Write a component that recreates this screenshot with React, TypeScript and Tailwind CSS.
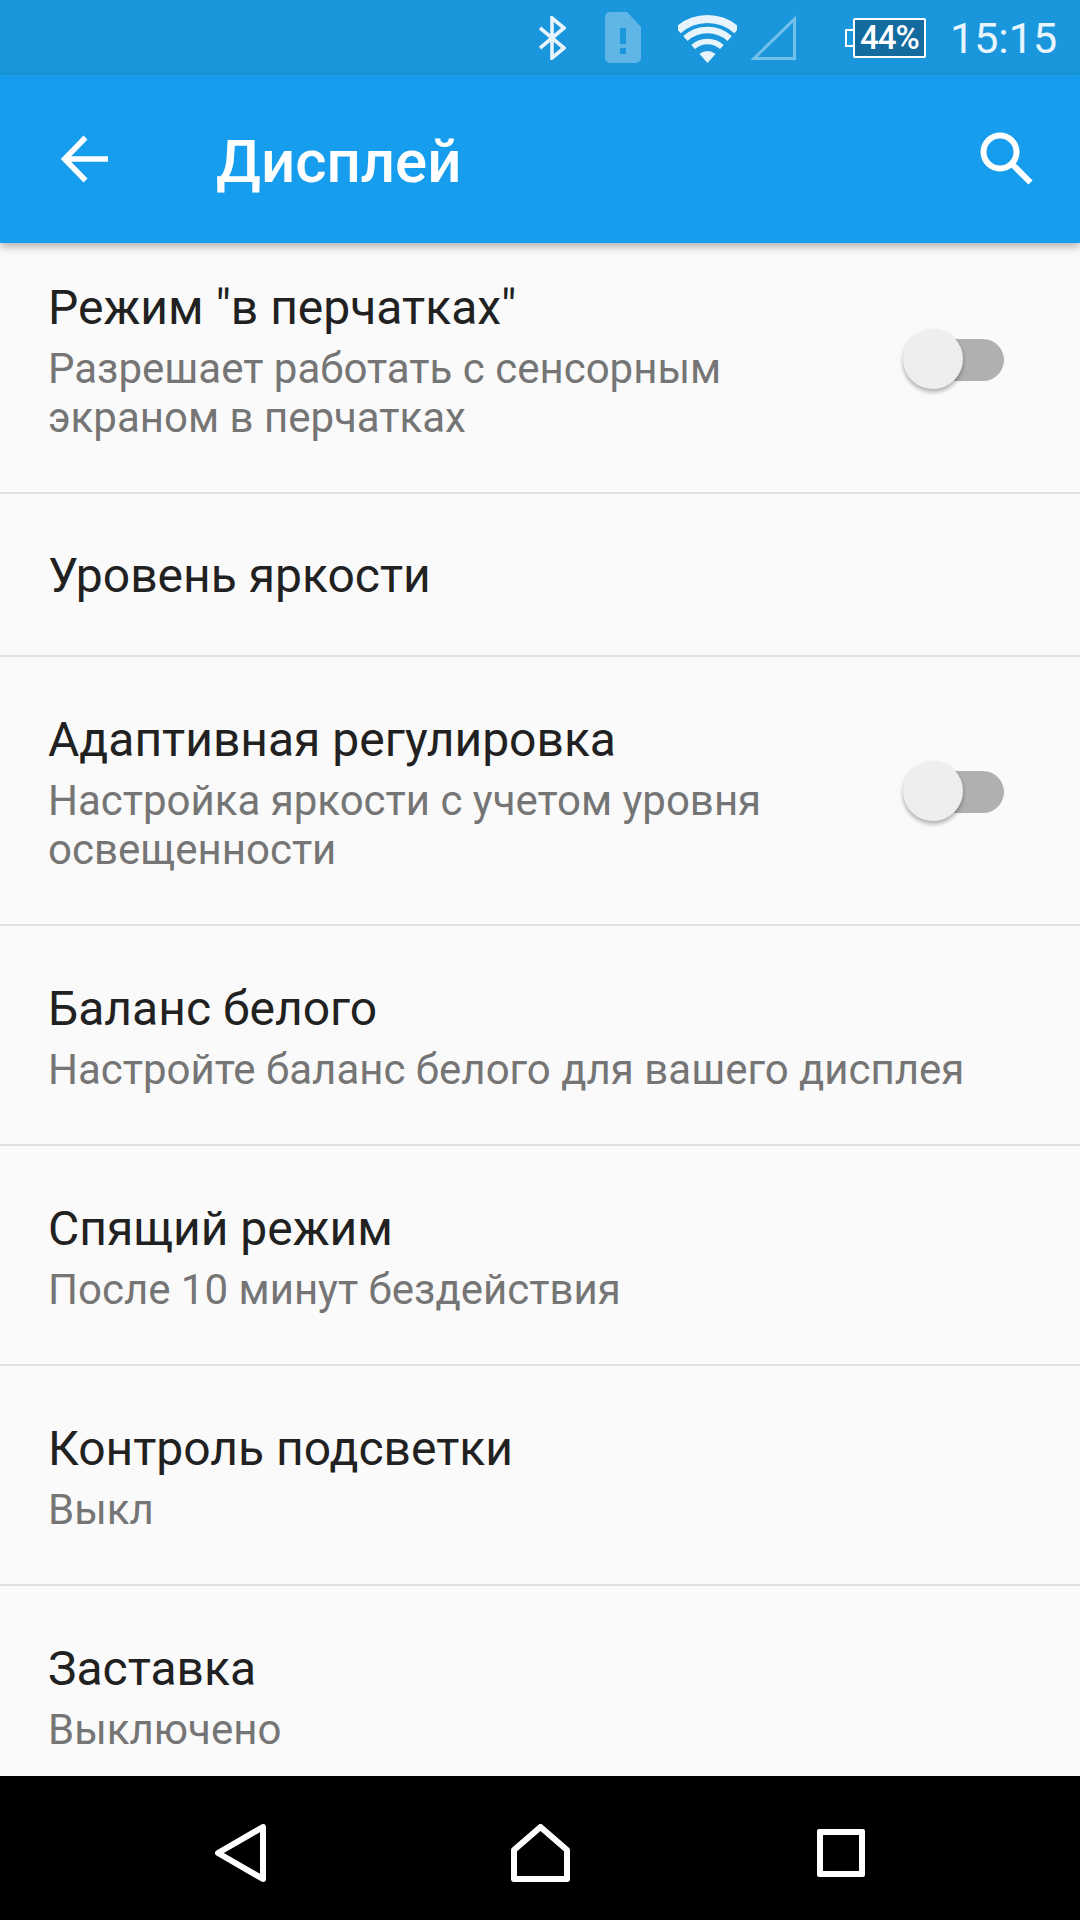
const rows = [
  { title: 'Режим "в перчатках"', sub: ['Разрешает работать с сенсорным', 'экраном в перчатках'], toggle: true },
  { title: 'Уровень яркости', sub: [] },
  { title: 'Адаптивная регулировка', sub: ['Настройка яркости с учетом уровня', 'освещенности'], toggle: true },
  { title: 'Баланс белого', sub: ['Настройте баланс белого для вашего дисплея'] },
  { title: 'Спящий режим', sub: ['После 10 минут бездействия'] },
  { title: 'Контроль подсветки', sub: ['Выкл'] },
  { title: 'Заставка', sub: ['Выключено'] },
];

function Toggle() {
  return (
    <div className="relative w-[101px] h-[60px] mb-[2px] shrink-0">
      <div className="absolute left-[29px] top-[10px] w-[72px] h-[42px] rounded-full bg-[#b0b0b0]" />
      <div className="absolute left-0 top-0 w-[60px] h-[60px] rounded-full bg-[#eeeeee] shadow-[0_3px_4px_rgba(0,0,0,0.3)]" />
    </div>
  );
}

function StatusBar() {
  return (
    <div className="flex items-center h-[75px] pl-[539px] bg-[#1a96dc] text-white">
      <svg width="27" height="44" viewBox="0 0 27 44" className="mr-[39px] opacity-90" fill="none" stroke="#fff" strokeWidth="3.6">
        <path d="M1 12 L25 32 L13 42 L13 2 L25 12 L1 32" />
      </svg>
      <svg width="36" height="51" viewBox="0 0 36 51" className="mr-[37px]">
        <path d="M5 0 H22 L36 15 V46 a5 5 0 0 1 -5 5 H5 a5 5 0 0 1 -5 -5 V5 a5 5 0 0 1 5 -5 Z" fill="#fff" fillOpacity="0.3" />
        <rect x="15" y="16" width="6" height="16" fill="#1a96dc" />
        <rect x="15" y="36" width="6" height="6" fill="#1a96dc" />
      </svg>
      <svg width="59" height="48" viewBox="0 0 59 48" className="mr-[14px] mt-[3px] opacity-90" fill="none" stroke="#fff">
        <path d="M0.100 15.300 A44 44 0 0 1 58.900 15.300" strokeWidth="8" />
        <path d="M7.400 23.500 A33 33 0 0 1 51.600 23.500" strokeWidth="6.500" />
        <path d="M15.100 32 A21.500 21.500 0 0 1 43.900 32" strokeWidth="5.500" />
        <path d="M29.500 48 L21.500 39.100 A12 12 0 0 1 37.500 39.100 Z" fill="#fff" stroke="none" />
      </svg>
      <svg width="45" height="45" viewBox="0 0 45 45" className="mr-[49px]" fill="none" stroke="#fff" strokeOpacity="0.4" strokeWidth="3">
        <path d="M43.500 4 V43.500 H3 Z" />
      </svg>
      <div className="flex items-center mr-[24px]">
        <div className="w-[8px] h-[18px] border-2 border-r-0 border-white" />
        <div className="w-[73px] h-[40px] bg-[#136ba0] border-2 border-white rounded-[2px] flex items-center justify-center text-[33px] leading-none font-medium tracking-[-1px] text-white">44%</div>
      </div>
      <span className="mt-[2px] text-[43px] leading-none text-white/90">15:15</span>
    </div>
  );
}

export default function App() {
  return (
    <div className="flex flex-col w-[1080px] h-[1920px] bg-[#fafafa] overflow-hidden font-['Roboto',sans-serif]">
      <StatusBar />
      <header className="relative z-10 flex items-center h-[168px] bg-[#169ded] shadow-[0_4px_8px_rgba(0,0,0,0.28)] text-white">
        <svg width="48" height="48" viewBox="0 0 48 48" className="ml-[60px] mr-[108px]" fill="none" stroke="#fff" strokeWidth="5.500">
          <path d="M48 24 H5 M25.500 2.500 L4.600 24 L25.500 45.500" />
        </svg>
        <h1 className="mt-[5px] text-[60px] font-medium leading-none">Дисплей</h1>
        <svg width="54" height="54" viewBox="0 0 54 54" className="ml-auto mr-[46px]" fill="none" stroke="#fff" strokeWidth="6">
          <circle cx="20" cy="20" r="16.500" />
          <path d="M32 32 L50.500 50.500" />
        </svg>
      </header>
      <main className="flex-1 overflow-hidden">
        <div className="-mt-[18px]">
          {rows.map((r) => (
            <div key={r.title} className={`flex items-center justify-between pl-[48px] pr-[76px] border-b-2 border-[#e0e0e0] ${r.sub.length ? 'pt-[53px] pb-[50px]' : 'pt-[52px] pb-[49px]'}`}>
              <div>
                <div className="text-[48px] leading-[60px] text-[#212121]">{r.title}</div>
                {r.sub.length > 0 && (
                  <div className="mt-[6px] text-[42px] leading-[49px] text-[#757575]">
                    {r.sub.map((s) => (
                      <div key={s}>{s}</div>
                    ))}
                  </div>
                )}
              </div>
              {r.toggle && <Toggle />}
            </div>
          ))}
        </div>
      </main>
      <nav className="flex items-center h-[144px] pt-[10px] bg-black">
        <svg width="52" height="58" viewBox="0 0 52 58" className="ml-[215px]" fill="none" stroke="#fff" strokeWidth="6" strokeLinejoin="round">
          <path d="M48 3 V55 L3 29 Z" />
        </svg>
        <svg width="59" height="58" viewBox="0 0 59 58" className="ml-[244px]" fill="none" stroke="#fff" strokeWidth="6" strokeLinejoin="round">
          <path d="M29.500 3 L56 26 V55 H3 V26 Z" />
        </svg>
        <div className="ml-[247px] w-[48px] h-[48px] border-[6px] border-white rounded-[2px]" />
      </nav>
    </div>
  );
}
